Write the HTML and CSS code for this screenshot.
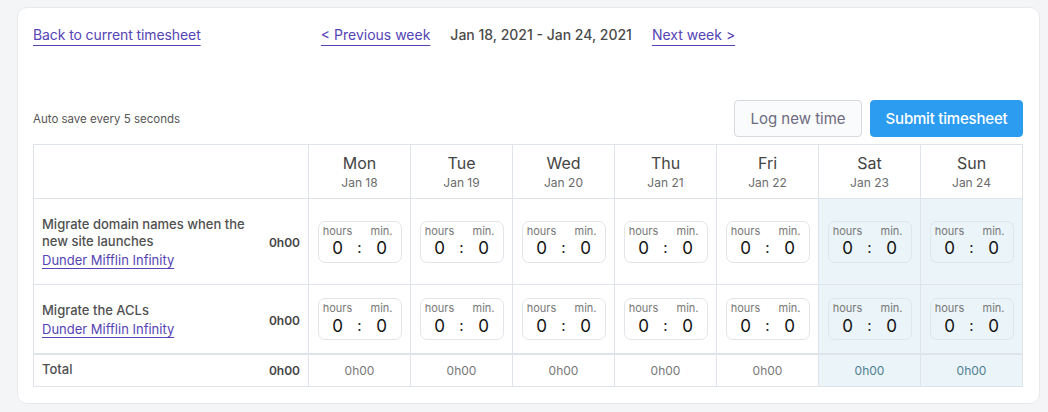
FILE: index.html
```html
<!DOCTYPE html>
<html>
<head>
<meta charset="utf-8">
<link rel="stylesheet" href="styles.css">
</head>
<body>
<div class="card">
  <div class="nav">
    <div class="nav-left"><a class="link" href="#">Back to current timesheet</a></div>
    <div class="nav-center">
      <a class="link" href="#">&lt; Previous week</a>
      <span class="range">Jan 18, 2021 - Jan 24, 2021</span>
      <a class="link" href="#">Next week &gt;</a>
    </div>
    <div></div>
  </div>
  <div class="toolbar">
    <span class="autosave">Auto save every 5 seconds</span>
    <div class="actions">
      <button class="btn btn-light">Log new time</button>
      <button class="btn btn-primary">Submit timesheet</button>
    </div>
  </div>
  <table class="sheet">
    <colgroup>
      <col class="c-name"><col class="c-day"><col class="c-day"><col class="c-day"><col class="c-day"><col class="c-day"><col class="c-day"><col class="c-day">
    </colgroup>
    <thead>
      <tr>
        <th></th>
        <th><div class="dname">Mon</div><div class="ddate">Jan 18</div></th>
        <th><div class="dname">Tue</div><div class="ddate">Jan 19</div></th>
        <th><div class="dname">Wed</div><div class="ddate">Jan 20</div></th>
        <th><div class="dname">Thu</div><div class="ddate">Jan 21</div></th>
        <th><div class="dname">Fri</div><div class="ddate">Jan 22</div></th>
        <th><div class="dname">Sat</div><div class="ddate">Jan 23</div></th>
        <th><div class="dname">Sun</div><div class="ddate">Jan 24</div></th>
      </tr>
    </thead>
    <tbody>
      <tr class="task">
        <td class="name-cell">
          <div class="name-wrap">
            <div class="task-info">
              <div class="task-title">Migrate domain names when the new site launches</div>
              <a class="link project" href="#">Dunder Mifflin Infinity</a>
            </div>
            <span class="sum">0h00</span>
          </div>
        </td>
        <td><div class="tbox"><span class="lbl">hours</span><span></span><span class="lbl">min.</span><span class="num">0</span><span class="colon">:</span><span class="num">0</span></div></td>
        <td><div class="tbox"><span class="lbl">hours</span><span></span><span class="lbl">min.</span><span class="num">0</span><span class="colon">:</span><span class="num">0</span></div></td>
        <td><div class="tbox"><span class="lbl">hours</span><span></span><span class="lbl">min.</span><span class="num">0</span><span class="colon">:</span><span class="num">0</span></div></td>
        <td><div class="tbox"><span class="lbl">hours</span><span></span><span class="lbl">min.</span><span class="num">0</span><span class="colon">:</span><span class="num">0</span></div></td>
        <td><div class="tbox"><span class="lbl">hours</span><span></span><span class="lbl">min.</span><span class="num">0</span><span class="colon">:</span><span class="num">0</span></div></td>
        <td class="wkend"><div class="tbox"><span class="lbl">hours</span><span></span><span class="lbl">min.</span><span class="num">0</span><span class="colon">:</span><span class="num">0</span></div></td>
        <td class="wkend"><div class="tbox"><span class="lbl">hours</span><span></span><span class="lbl">min.</span><span class="num">0</span><span class="colon">:</span><span class="num">0</span></div></td>
      </tr>
      <tr class="task">
        <td class="name-cell">
          <div class="name-wrap">
            <div class="task-info">
              <div class="task-title">Migrate the ACLs</div>
              <a class="link project" href="#">Dunder Mifflin Infinity</a>
            </div>
            <span class="sum">0h00</span>
          </div>
        </td>
        <td><div class="tbox"><span class="lbl">hours</span><span></span><span class="lbl">min.</span><span class="num">0</span><span class="colon">:</span><span class="num">0</span></div></td>
        <td><div class="tbox"><span class="lbl">hours</span><span></span><span class="lbl">min.</span><span class="num">0</span><span class="colon">:</span><span class="num">0</span></div></td>
        <td><div class="tbox"><span class="lbl">hours</span><span></span><span class="lbl">min.</span><span class="num">0</span><span class="colon">:</span><span class="num">0</span></div></td>
        <td><div class="tbox"><span class="lbl">hours</span><span></span><span class="lbl">min.</span><span class="num">0</span><span class="colon">:</span><span class="num">0</span></div></td>
        <td><div class="tbox"><span class="lbl">hours</span><span></span><span class="lbl">min.</span><span class="num">0</span><span class="colon">:</span><span class="num">0</span></div></td>
        <td class="wkend"><div class="tbox"><span class="lbl">hours</span><span></span><span class="lbl">min.</span><span class="num">0</span><span class="colon">:</span><span class="num">0</span></div></td>
        <td class="wkend"><div class="tbox"><span class="lbl">hours</span><span></span><span class="lbl">min.</span><span class="num">0</span><span class="colon">:</span><span class="num">0</span></div></td>
      </tr>
    </tbody>
    <tfoot>
      <tr class="total">
        <td class="name-cell total-name">
          <div class="name-wrap"><span class="total-label">Total</span><span class="sum">0h00</span></div>
        </td>
        <td>0h00</td>
        <td>0h00</td>
        <td>0h00</td>
        <td>0h00</td>
        <td>0h00</td>
        <td class="wkend">0h00</td>
        <td class="wkend">0h00</td>
      </tr>
    </tfoot>
  </table>
</div>
</body>
</html>
```
FILE: styles.css
```css
* { box-sizing: border-box; }
html, body { margin: 0; }
body {
  background: #f4f5f7;
  padding: 7px 8px 8px 17px;
  font-family: Inter, "Liberation Sans", Arial, sans-serif;
  color: #444;
}
.card {
  background: #fff;
  border: 1px solid #e8e9ec;
  border-radius: 10px;
  padding: 14px 16px 17px 15px;
  height: 397px;
}
.link {
  color: #5444b5;
  text-decoration: underline;
  text-decoration-thickness: 1px;
  text-underline-offset: 5px;
}
.nav {
  display: grid;
  grid-template-columns: 1fr auto 1fr;
  align-items: center;
  font-size: 14px;
  height: 24px;
}
.nav-left { letter-spacing: -0.1px; }
.nav-center {
  display: flex;
  gap: 20px;
  align-items: center;
}
.range {
  color: #4a4a4a;
  font-weight: 500;
}
.toolbar {
  display: flex;
  justify-content: space-between;
  align-items: center;
  margin-top: 54px;
}
.autosave {
  font-size: 11.5px;
  color: #555;
}
.actions {
  display: flex;
  gap: 8px;
}
.btn {
  font-family: inherit;
  font-size: 15px;
  height: 37px;
  border-radius: 4px;
  padding: 0;
  white-space: nowrap;
}
.btn-light {
  background: #fafbfc;
  border: 1px solid #d6d9de;
  color: #6c6a80;
  width: 128px;
}
.btn-primary {
  background: #2b9cf0;
  border: 1px solid #2b9cf0;
  color: #fff;
  font-weight: 500;
  width: 153px;
  letter-spacing: -0.2px;
}
.sheet {
  margin-top: 7px;
  width: 989px;
  border-collapse: collapse;
  table-layout: fixed;
}
.c-name { width: 275px; }
.c-day { width: 102px; }
.sheet th, .sheet td {
  border: 1px solid #dfe3ea;
  padding: 0;
}
.sheet thead th {
  height: 54px;
  font-weight: 400;
  text-align: center;
  vertical-align: middle;
}
.dname {
  font-size: 16px;
  color: #444;
  line-height: 20px;
}
.ddate {
  font-size: 12px;
  color: #6b6b6b;
  line-height: 16px;
  margin-top: 2px;
}
.sheet tbody td {
  vertical-align: middle;
  text-align: center;
}
.task td { padding: 12px 8px; }
.task td.name-cell { padding: 17px 8px 15px; }
.sheet tbody td.name-cell { text-align: left; }
.name-wrap {
  display: flex;
  align-items: center;
  justify-content: space-between;
  gap: 8px;
}
.task-info {
  font-size: 13px;
  line-height: 17px;
  max-width: 225px;
}
.task-title {
  color: #505050;
  font-weight: 500;
}
.project {
  display: inline-block;
  margin-top: 2px;
  text-underline-offset: 3px;
}
.sum {
  font-size: 12px;
  font-weight: 600;
  color: #444;
}
.tbox {
  display: inline-grid;
  grid-template-columns: 30px 14px 30px;
  justify-items: center;
  align-items: center;
  width: 84px;
  height: 42px;
  border: 1px solid #e2e5ea;
  border-radius: 7px;
  background: #fff;
  padding: 3px 4px 3px 4px;
  vertical-align: middle;
}
.lbl {
  font-size: 11px;
  color: #777;
  line-height: 13px;
}
.num {
  font-size: 17px;
  color: #111;
  line-height: 20px;
}
.colon {
  font-size: 15px;
  color: #222;
  line-height: 20px;
}
.wkend { background: #eaf4f9; }
.wkend .tbox { background: #eaf4f9; border-color: #dce8ee; }
.total td {
  border-top: 2px solid #dfe3ea;
  height: 32px;
  text-align: center;
  font-size: 12px;
  color: #777;
  padding: 0 8px;
}
.total td.wkend { color: #4f7f90; }
.total td.total-name { text-align: left; }
.total-label {
  font-size: 13px;
  font-weight: 500;
  color: #505050;
  margin-top: -2px;
}
```
